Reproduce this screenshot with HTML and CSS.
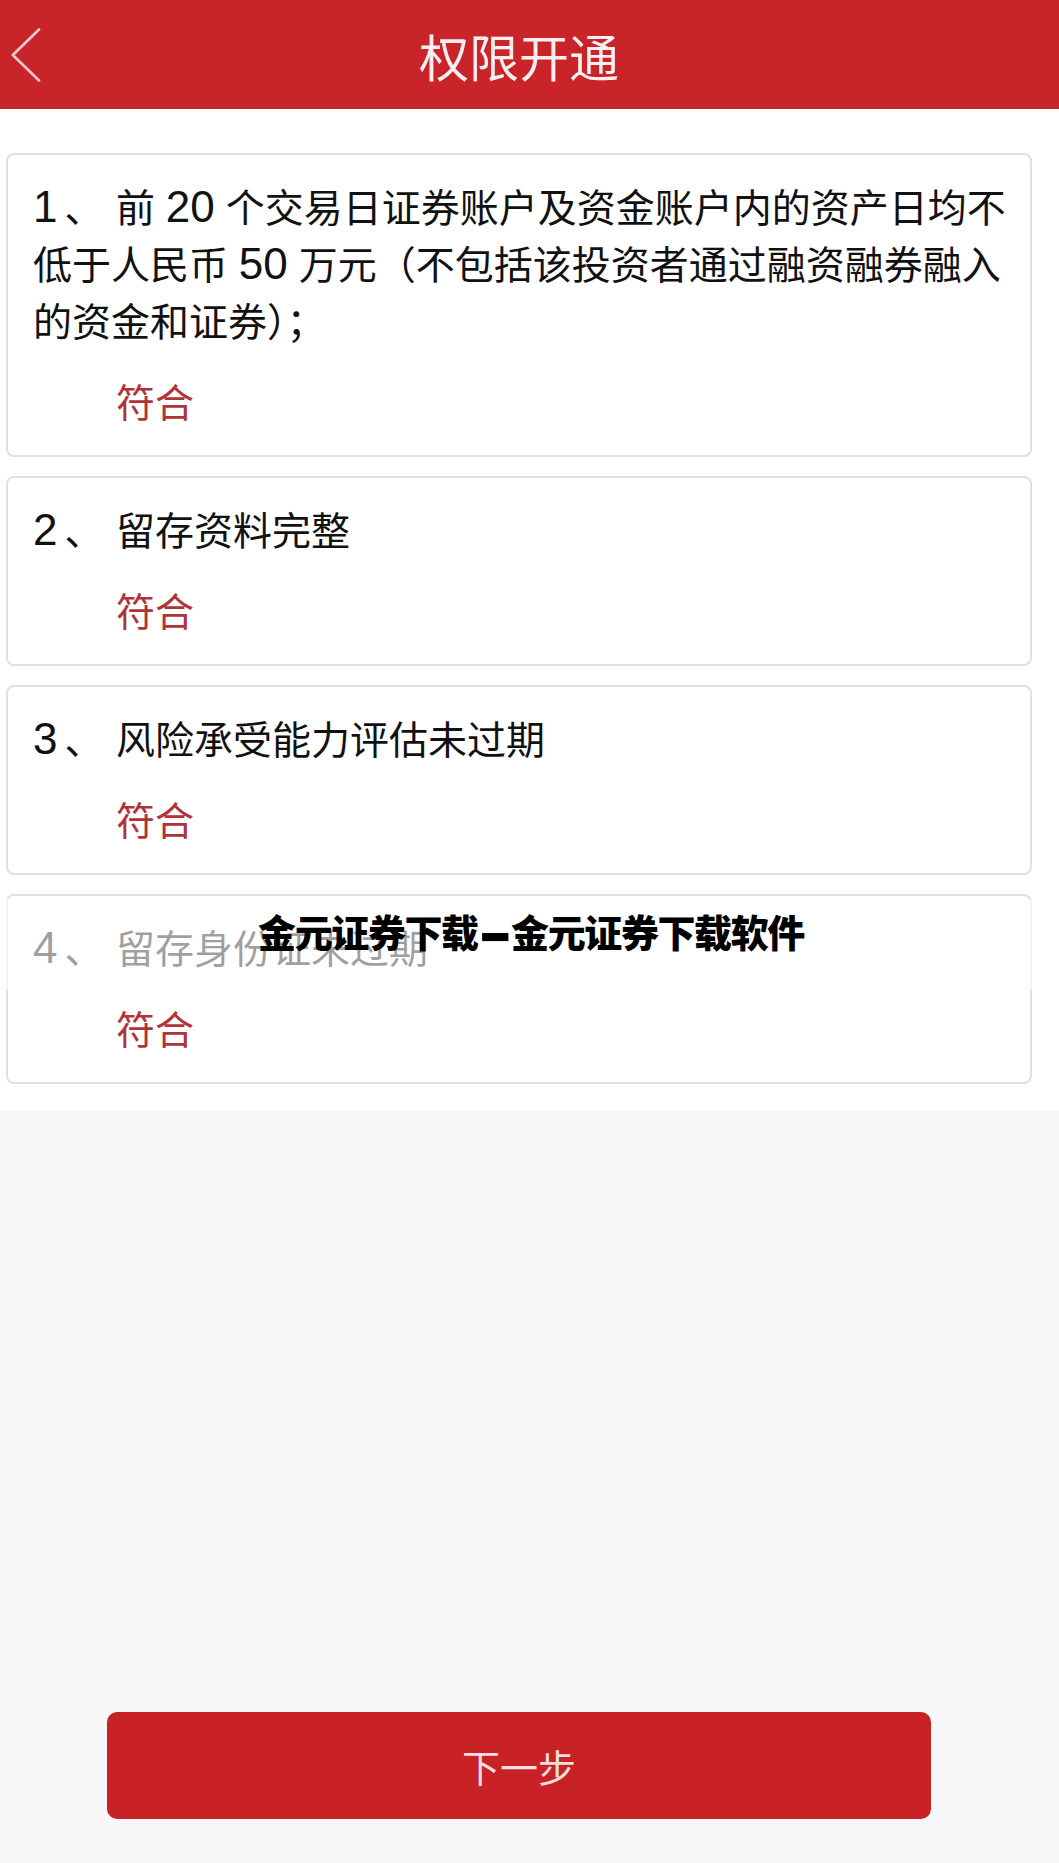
FILE: index.html
```html
<!DOCTYPE html>
<html lang="zh-CN">
<head>
<meta charset="utf-8">
<title>权限开通</title>
<link rel="stylesheet" href="styles.css">
</head>
<body>
<header class="topbar">
  <div class="back">
    <svg class="back-icon" width="30" height="54" viewBox="0 0 30 54" aria-hidden="true">
      <polyline points="28,1.5 1.8,27 28,52.5" fill="none" stroke="#f4c9c9" stroke-width="2.6" stroke-linecap="round" stroke-linejoin="round"/>
    </svg>
  </div>
  <h1 class="title">权限开通</h1>
  <div class="spacer"></div>
</header>

<main class="content">
  <section class="card">
    <p class="item"><span class="idx"><span class="num">1</span>、</span>前 <span class="num">20</span> 个交易日证券账户及资金账户内的资产日均不<br>低于人民币 <span class="num">50</span> 万元（不包括该投资者通过融资融券融入<br>的资金和证券）；</p>
    <p class="status">符合</p>
  </section>
  <section class="card">
    <p class="item"><span class="idx"><span class="num">2</span>、</span>留存资料完整</p>
    <p class="status">符合</p>
  </section>
  <section class="card">
    <p class="item"><span class="idx"><span class="num">3</span>、</span>风险承受能力评估未过期</p>
    <p class="status">符合</p>
  </section>
  <section class="card">
    <p class="item"><span class="idx"><span class="num">4</span>、</span>留存身份证未过期</p>
    <p class="status">符合</p>
  </section>
</main>

<footer class="bottom">
  <button class="next" type="button">下一步</button>
</footer>

<div class="watermark"><span class="watermark-text">金元证券下载<span class="dash">—</span>金元证券下载软件</span></div>
</body>
</html>
```

FILE: styles.css
```css
html, body {
  margin: 0;
  padding: 0;
}

body {
  position: relative;
  display: flex;
  flex-direction: column;
  min-height: 100vh;
  background: #f7f6f9;
  font-family: "Liberation Sans", "Noto Sans CJK SC", sans-serif;
  color: #161616;
}

.topbar {
  display: grid;
  grid-template-columns: 50px 1fr 71px;
  align-items: center;
  height: 109px;
  background: #c8242a;
}

.back {
  display: flex;
  align-items: center;
  padding-left: 11px;
}

.back-icon {
  display: block;
}

.title {
  margin: 0;
  text-align: center;
  font-family: "Noto Sans CJK SC", sans-serif;
  font-weight: 400;
  font-size: 50px;
  line-height: 60px;
  color: #fbeeee;
  letter-spacing: 0;
}

.content {
  background: #ffffff;
  display: flex;
  flex-direction: column;
  gap: 19px;
  padding: 44px 27px 27px 6px;
}

.card {
  border: 2px solid #e0dfe2;
  border-radius: 8px;
  background: #fff;
  padding: 25px 10px 26px 25px;
}

.item {
  margin: 0;
  font-size: 39px;
  line-height: 57px;
  color: #111111;
  white-space: nowrap;
}

.idx {
  display: inline-block;
  width: 83px;
}

.num {
  font-family: "Liberation Sans", sans-serif;
  font-size: 44px;
  line-height: 0;
}

.idx .num {
  margin-right: 7px;
}

.status {
  margin: 21px 0 0 0;
  padding-left: 83px;
  font-family: "Noto Sans CJK SC", sans-serif;
  font-size: 39px;
  line-height: 57px;
  color: #b0333a;
}

.bottom {
  flex: 1;
  display: flex;
  align-items: flex-end;
  padding: 0 0 44px 107px;
}

.next {
  width: 824px;
  height: 107px;
  border: none;
  border-radius: 10px;
  background: #c92226;
  color: #f6dede;
  font-family: "Noto Sans CJK SC", sans-serif;
  font-size: 38px;
  padding: 0;
}

.watermark {
  position: absolute;
  top: 899px;
  left: 0;
  right: 0;
  height: 91px;
  background: rgba(255, 255, 255, 0.6);
  display: flex;
  justify-content: center;
  padding-left: 3px;
}

.watermark-text {
  margin-top: 9px;
  font-family: "Noto Sans CJK SC", sans-serif;
  font-weight: 900;
  font-size: 38px;
  line-height: 46px;
  letter-spacing: -1.4px;
  color: #000;
}

.dash {
  display: inline-block;
  transform: scale(0.85, 1.9);
  transform-origin: 50% 58%;
}
```
